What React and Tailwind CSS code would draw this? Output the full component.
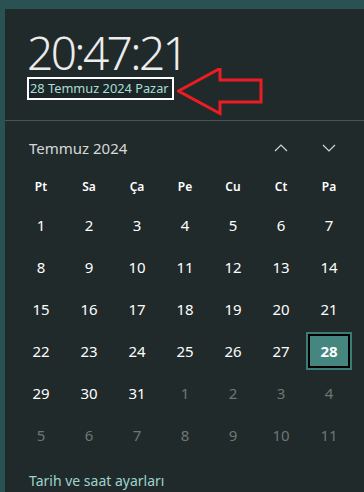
const weekDays = ["Pt", "Sa", "Ça", "Pe", "Cu", "Ct", "Pa"];

const buildDays = () => {
  const days = [];
  for (let d = 1; d <= 31; d++) days.push({ n: d, cur: true });
  for (let d = 1; d <= 11; d++) days.push({ n: d, cur: false });
  return days;
};

const Chevron = ({ up }) => (
  <svg width="14" height="8" viewBox="0 0 14 8" className="text-[#d0d4d4]">
    <polyline
      points={up ? "1,7 7,1 13,7" : "1,1 7,7 13,1"}
      fill="none"
      stroke="currentColor"
      strokeWidth="1.2"
    />
  </svg>
);

const App = () => {
  const days = buildDays();

  return (
    <div
      className="w-[364px] h-[492px] bg-[#2a5253] pt-[9px] pl-[5px] overflow-hidden"
      style={{ fontFamily: '"Noto Sans", "Open Sans", sans-serif' }}
    >
      <div className="relative h-full bg-[#212a2a] flex flex-col">
        <div className="pl-[22px] pt-[23px] h-[111px]">
          <div className="text-[46px] leading-[40px] font-light text-[#ececec] tracking-[-2.6px]">
            20:47:21
          </div>
          <div className="mt-[5px] inline-block border-2 border-white bg-[#1c2525] pl-[1px] pr-[3px] text-[12.8px] leading-[19px] text-[#a9ddd8]">
            28 Temmuz 2024 Pazar
          </div>
        </div>

        <svg
          className="absolute left-[172px] top-[59px]"
          width="90"
          height="50"
          viewBox="0 0 90 50"
        >
          <polygon
            points="1.5,23 43,0.5 43,12 84,12 84,34 43,34 43,45.5"
            fill="none"
            stroke="#ec1c24"
            strokeWidth="3"
          />
        </svg>

        <div className="border-t border-[#4a5453]" />

        <div className="grid grid-cols-[repeat(7,46px)] gap-x-[2px] pl-[13px] h-[50px] pt-[4px] items-center">
          <span className="col-span-5 pl-[11px] text-[15px] text-[#d6d9d9] whitespace-nowrap">
            Temmuz 2024
          </span>
          <div className="flex justify-center">
            <Chevron up />
          </div>
          <div className="flex justify-center">
            <Chevron />
          </div>
        </div>

        <div className="grid grid-cols-[repeat(7,46px)] gap-x-[2px] gap-y-[4px] pl-[13px]">
          {weekDays.map((w) => (
            <div
              key={w}
              className="h-[31px] flex items-center justify-center text-[12px] font-semibold text-white"
            >
              {w}
            </div>
          ))}
          {days.map((d, i) =>
            d.cur && d.n === 28 ? (
              <div
                key={i}
                className="h-[38px] flex items-center justify-center border-2 border-[#3d7b77] bg-[#458680]"
              >
                <div className="w-full h-full border-2 border-black flex items-center justify-center text-[15px] font-bold text-white">
                  28
                </div>
              </div>
            ) : (
              <div
                key={i}
                className={`h-[38px] flex items-center justify-center text-[15px] ${
                  d.cur ? "text-white" : "text-[#6e7675]"
                }`}
              >
                {d.n}
              </div>
            )
          )}
        </div>

        <div className="pl-[24px] mt-auto pb-[1px] text-[14px] text-[#9ed4cf]">
          Tarih ve saat ayarları
        </div>
      </div>
    </div>
  );
};

export default App;
